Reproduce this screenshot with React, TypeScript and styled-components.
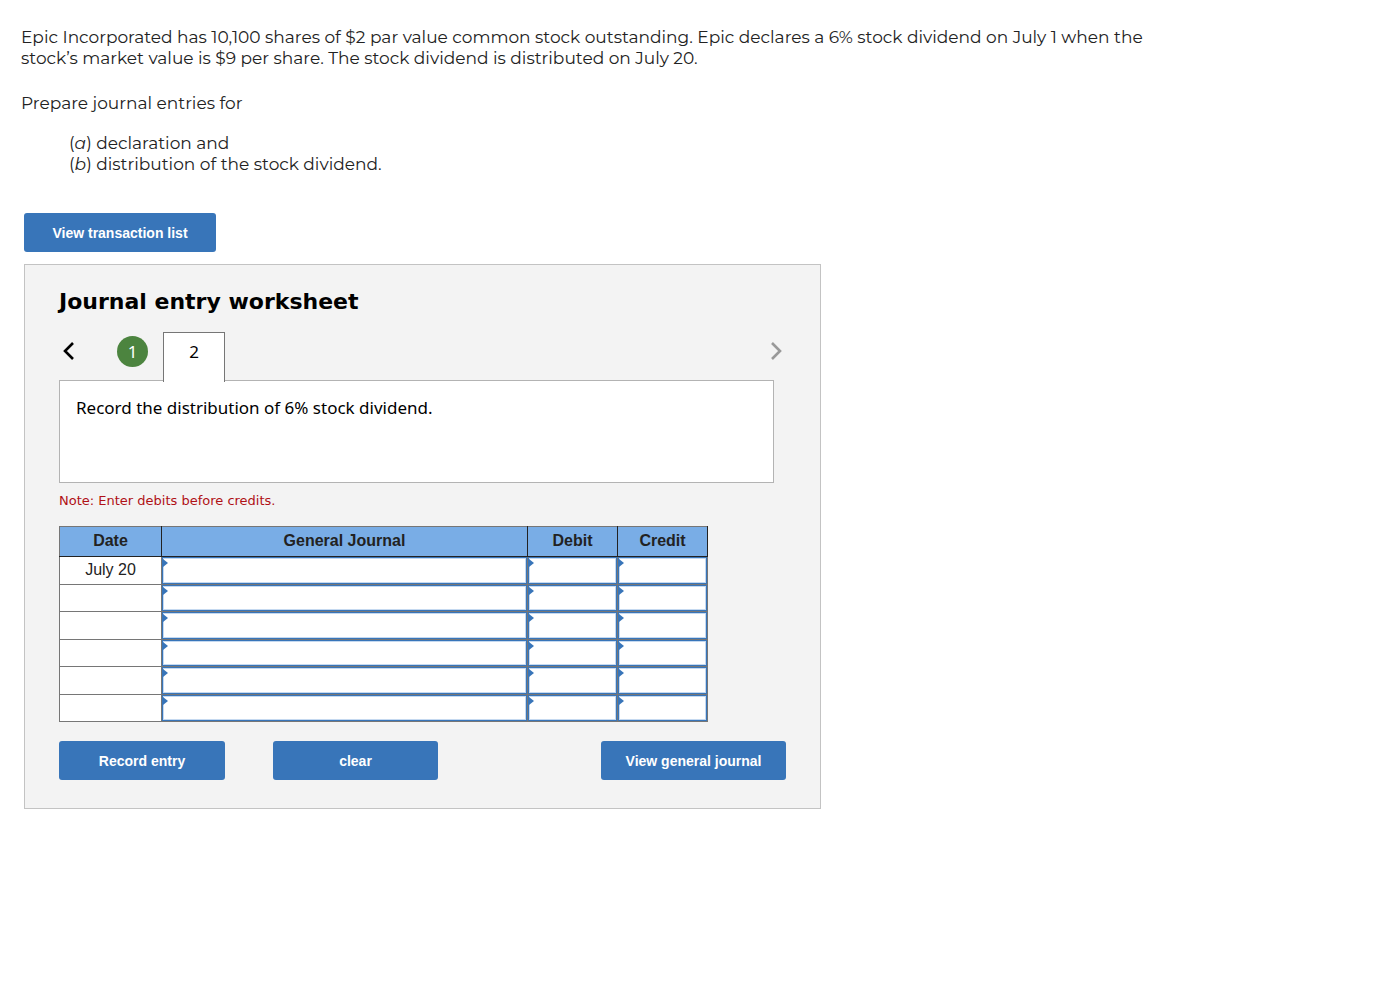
import React from "react";
import styled, { createGlobalStyle } from "styled-components";

const GlobalStyle = createGlobalStyle`
  *, *::before, *::after { box-sizing: border-box; }
  body { margin: 0; background: #fff; color: #000; font-family: "Liberation Sans", Arial, sans-serif; }
`;

const Page = styled.main`
  padding: 27px 24px 24px 21px;
`;

const Question = styled.section`
  max-width: 1140px;
  font-family: "Proxima Nova", Montserrat, Lato, sans-serif;
  font-size: 17px;
  line-height: 21px;
  color: #222;
`;

const Paragraph = styled.p`
  margin: 0 0 24px;
`;

const Parts = styled.ul`
  list-style: none;
  margin: -5px 0 0;
  padding: 0 0 0 48px;
`;

const Activity = styled.section`
  margin: 38px 0 0 3px;
  max-width: 797px;
`;

const BlueButton = styled.button<{ $width: number }>`
  width: ${(p) => p.$width}px;
  height: 39px;
  padding: 0;
  border: 0;
  border-radius: 3px;
  background: #3875b9;
  color: #fff;
  font: bold 14px "Liberation Sans", Arial, sans-serif;
  cursor: pointer;
`;

const Worksheet = styled.div`
  margin-top: 12px;
  padding: 23px 34px 28px;
  border: 1px solid #c3c3c3;
  background: #f3f3f3;
`;

const Title = styled.h1`
  margin: 0;
  font: bold 22px/28px "DejaVu Sans", Verdana, sans-serif;
`;

const TabBar = styled.nav`
  display: flex;
  align-items: flex-start;
  margin-top: 16px;
`;

const Arrow = styled.button<{ $color: string }>`
  display: flex;
  align-items: center;
  justify-content: center;
  width: 20px;
  height: 38px;
  padding: 0;
  border: 0;
  background: none;
  color: ${(p) => p.$color};
  cursor: pointer;
`;

const StepDone = styled.button`
  width: 31px;
  height: 31px;
  margin: 4px 15px 0 38px;
  padding: 0;
  border: 0;
  border-radius: 50%;
  background: #4c843f;
  color: #fff;
  font: 17px/31px "Noto Sans", Verdana, sans-serif;
  cursor: pointer;
`;

const StepActive = styled.button`
  position: relative;
  width: 62px;
  height: 50px;
  margin: 0 auto -2px 0;
  padding: 0 0 12px;
  border: 1px solid #767676;
  border-bottom: 0;
  background: #fff;
  color: #000;
  font: 17px/24px "Noto Sans", Verdana, sans-serif;
  cursor: pointer;
`;

const Instruction = styled.div`
  min-height: 103px;
  margin-right: 12px;
  padding: 16px;
  border: 1px solid #b3b3b3;
  background: #fff;
  font: 17px/22px "Noto Sans", Verdana, sans-serif;
`;

const Note = styled.p`
  margin: 9px 0 17px;
  font: 13px/17px "DejaVu Sans", Verdana, sans-serif;
  color: #b01116;
`;

const Journal = styled.table`
  width: 649px;
  max-width: 100%;
  height: 196px;
  border-collapse: collapse;
  table-layout: fixed;
  color: #222;
  font-size: 16px;
`;

const HeadCell = styled.th<{ $width?: number }>`
  width: ${(p) => (p.$width ? `${p.$width}px` : "auto")};
  height: 30px;
  padding: 0 0 2px;
  border: 1px solid #222;
  border-top-color: #767676;
  background: #79ade6;

  &:first-child { border-left-color: #767676; }
`;

const DateCell = styled.td`
  padding: 0;
  border: 1px solid #767676;
  background: #fff;
  text-align: center;
`;

const EntryCell = styled.td`
  position: relative;
  height: 27px;
  padding: 0;
  border: 1px solid #767676;
  background: #fff;

  &::before {
    content: "";
    position: absolute;
    top: 2px;
    left: 1px;
    border: 4px solid transparent;
    border-left: 5px solid #3875b9;
    border-right: 0;
  }
`;

const EntryInput = styled.input`
  display: block;
  width: 100%;
  height: 100%;
  padding: 0 8px;
  border: 1px solid #3875b9;
  box-shadow: inset 0 0 0 1px #c5d9f0;
  outline: 0;
  background: #fff;
  font: 16px "Liberation Sans", Arial, sans-serif;
`;

const Actions = styled.div`
  display: flex;
  gap: 48px;
  margin-top: 19px;

  & > :last-child { margin-left: auto; }
`;

const columns = [
  { name: "General Journal" },
  { name: "Debit", width: 90 },
  { name: "Credit", width: 90 },
];
const dates = ["July 20", "", "", "", "", ""];

const Chevron = ({ d }: { d: string }) => (
  <svg width="14" height="20" viewBox="0 0 14 20" fill="none" stroke="currentColor" strokeWidth="2.6" aria-hidden="true">
    <path d={d} />
  </svg>
);

export default function App() {
  return (
    <>
      <GlobalStyle />
      <Page>
        <Question>
          <Paragraph>
            Epic Incorporated has 10,100 shares of $2 par value common stock outstanding. Epic declares a 6% stock
            dividend on July 1 when the stock’s market value is $9 per share. The stock dividend is distributed on
            July 20.
          </Paragraph>
          <Paragraph>Prepare journal entries for</Paragraph>
          <Parts>
            <li>(<em>a</em>) declaration and</li>
            <li>(<em>b</em>) distribution of the stock dividend.</li>
          </Parts>
        </Question>
        <Activity>
          <BlueButton type="button" $width={192}>View transaction list</BlueButton>
          <Worksheet>
            <Title>Journal entry worksheet</Title>
            <TabBar aria-label="Journal entries">
              <Arrow type="button" aria-label="Previous entry" $color="#000">
                <Chevron d="M11 2L3 10L11 18" />
              </Arrow>
              <StepDone type="button">1</StepDone>
              <StepActive type="button" aria-current="step">2</StepActive>
              <Arrow type="button" aria-label="Next entry" $color="#999">
                <Chevron d="M3 2L11 10L3 18" />
              </Arrow>
            </TabBar>
            <Instruction>Record the distribution of 6% stock dividend.</Instruction>
            <Note>Note: Enter debits before credits.</Note>
            <Journal>
              <thead>
                <tr>
                  <HeadCell scope="col" $width={102}>Date</HeadCell>
                  {columns.map((c) => (
                    <HeadCell key={c.name} scope="col" $width={c.width}>{c.name}</HeadCell>
                  ))}
                </tr>
              </thead>
              <tbody>
                {dates.map((date, row) => (
                  <tr key={row}>
                    <DateCell>{date}</DateCell>
                    {columns.map((c) => (
                      <EntryCell key={c.name}>
                        <EntryInput type="text" aria-label={`${c.name}, line ${row + 1}`} />
                      </EntryCell>
                    ))}
                  </tr>
                ))}
              </tbody>
            </Journal>
            <Actions>
              <BlueButton type="button" $width={166}>Record entry</BlueButton>
              <BlueButton type="button" $width={165}>clear</BlueButton>
              <BlueButton type="button" $width={185}>View general journal</BlueButton>
            </Actions>
          </Worksheet>
        </Activity>
      </Page>
    </>
  );
}
